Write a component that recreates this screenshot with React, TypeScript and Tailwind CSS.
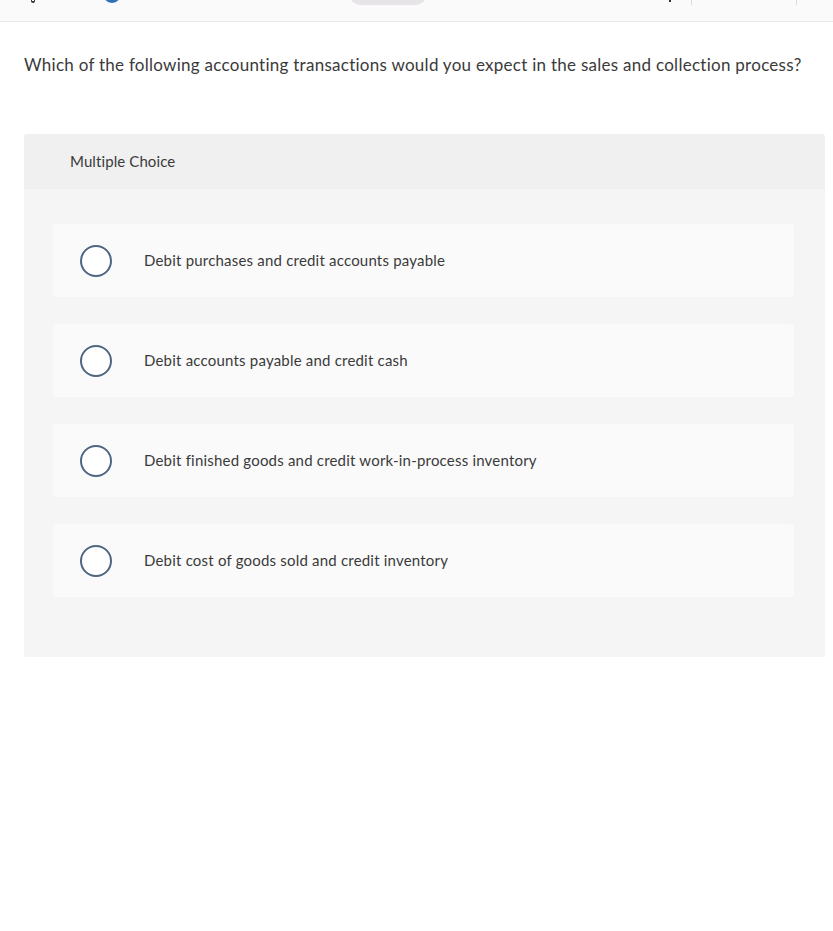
import React from "react";

const options = [
  "Debit purchases and credit accounts payable",
  "Debit accounts payable and credit cash",
  "Debit finished goods and credit work-in-process inventory",
  "Debit cost of goods sold and credit inventory",
];

function TopBar() {
  return (
    <div className="h-[22px] overflow-hidden bg-[#fafafa] border-b border-[#ebebeb] flex items-start">
      <div className="ml-[31px] w-[4px] h-[3px] rounded-b-full border-b-2 border-x border-[#333]" />
      <div className="ml-[68px] -mt-[15px] w-[18px] h-[18px] rounded-full bg-[#2f6fb5]" />
      <div className="ml-[229px] -mt-[25px] w-[76px] h-[30px] rounded-[10px] bg-[#e6e4e7]" />
      <div className="ml-[243px] w-[2px] h-[2px] bg-[#333]" />
      <div className="ml-[20px] w-px h-[5px] bg-[#dddddd]" />
      <div className="ml-[104px] w-px h-[5px] bg-[#dddddd]" />
    </div>
  );
}

function Option({ text }: { text: string }) {
  return (
    <div className="h-[73px] bg-[#fafafa] rounded-[4px] flex items-center">
      <div className="ml-[27px] w-[32px] h-[32px] rounded-full border-2 border-[#4d6782] bg-white shrink-0" />
      <div className="ml-[32px] text-[15px] tracking-[0.2px] text-[#3a3a3a]">{text}</div>
    </div>
  );
}

export default function App() {
  return (
    <div className="min-h-screen bg-white" style={{ fontFamily: "Lato, 'Open Sans', sans-serif" }}>
      <TopBar />
      <div className="px-[24px] pt-[31px]">
        <p className="text-[17px] leading-[24px] text-[#3a3a3a] tracking-[0.27px]">
          Which of the following accounting transactions would you expect in the sales and collection process?
        </p>
        <div className="mt-[57px] w-[801px] bg-[#f5f5f5] rounded-[3px] overflow-hidden">
          <div className="h-[55px] bg-[#f0f0f0] flex items-center pl-[46px] text-[15px] tracking-[0.1px] text-[#3a3a3a]">
            Multiple Choice
          </div>
          <div className="pt-[35px] pb-[60px] pl-[29px] pr-[31px] flex flex-col gap-[27px]">
            {options.map((o) => (
              <Option key={o} text={o} />
            ))}
          </div>
        </div>
      </div>
    </div>
  );
}
